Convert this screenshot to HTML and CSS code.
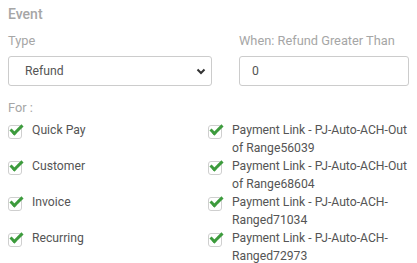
FILE: index.html
```html
<!DOCTYPE html>
<html>
<head>
    <link rel="stylesheet" href="styles.css">
</head>
<body>
    <div class="event">
        <div class="title">Event</div>
        <div class="fields">
            <div class="field type-field">
                <label class="label">Type</label>
                <div class="select">
                    <span>Refund</span>
                    <svg class="chevron" width="10" height="7" viewBox="0 0 10 7">
                        <path d="M1.5 1.5 L5 5 L8.5 1.5" fill="none" stroke="#333" stroke-width="2"/>
                    </svg>
                </div>
            </div>
            <div class="field amount-field">
                <label class="label">When: Refund Greater Than</label>
                <div class="input">0</div>
            </div>
        </div>

        <div class="label for-label">For :</div>
        <div class="options">
            <div class="option"><span class="check"></span><span>Quick Pay</span></div>
            <div class="option"><span class="check"></span><span>Payment Link - PJ-Auto-ACH-Out of Range56039</span></div>
            <div class="option"><span class="check"></span><span>Customer</span></div>
            <div class="option"><span class="check"></span><span>Payment Link - PJ-Auto-ACH-Out of Range68604</span></div>
            <div class="option"><span class="check"></span><span>Invoice</span></div>
            <div class="option"><span class="check"></span><span>Payment Link - PJ-Auto-ACH-Ranged71034</span></div>
            <div class="option"><span class="check"></span><span>Recurring</span></div>
            <div class="option"><span class="check"></span><span>Payment Link - PJ-Auto-ACH-Ranged72973</span></div>
        </div>
    </div>
</body>
</html>
```
FILE: styles.css
```css
body {
    margin: 0;
    background-color: #ffffff;
    font-family: Roboto, "Liberation Sans", sans-serif;
    color: #555555;
}

.event {
    padding: 4px 8px 0 8px;
}

.title {
    font-size: 14px;
    font-weight: 500;
    color: #a6a6a6;
    line-height: 20px;
}

.label {
    display: block;
    font-size: 12.8px;
    color: #a6a6a6;
    line-height: 16px;
}

.fields {
    display: flex;
    margin-top: 9px;
}

.type-field {
    width: 204px;
}

.amount-field {
    width: 170px;
    margin-left: 27px;
}

.field .label {
    margin-bottom: 7px;
}

.select,
.input {
    box-sizing: border-box;
    height: 30px;
    border: 1px solid #cccccc;
    border-radius: 3px;
    font-size: 12.2px;
    color: #555555;
    display: flex;
    align-items: center;
}

.select {
    padding: 0 5px 0 16px;
    justify-content: space-between;
}

.input {
    padding: 0 12px;
}

.for-label {
    margin-top: 14px;
}

.options {
    display: grid;
    grid-template-columns: 200px 204px;
    margin-top: 5px;
}

.option {
    display: flex;
    align-items: flex-start;
    font-size: 12.2px;
    line-height: 18px;
    color: #555555;
}

.check {
    position: relative;
    flex: none;
    box-sizing: border-box;
    width: 14px;
    height: 14px;
    margin: 4px 10px 0 0;
    border: 1px solid #cfcfcf;
    border-radius: 3px;
    background-color: #ffffff;
}

.check::after {
    content: "";
    position: absolute;
    left: 1px;
    top: -1px;
    width: 10px;
    height: 4px;
    border-left: 3px solid #3d9b3d;
    border-bottom: 3px solid #3d9b3d;
    transform: rotate(-45deg);
}
```
